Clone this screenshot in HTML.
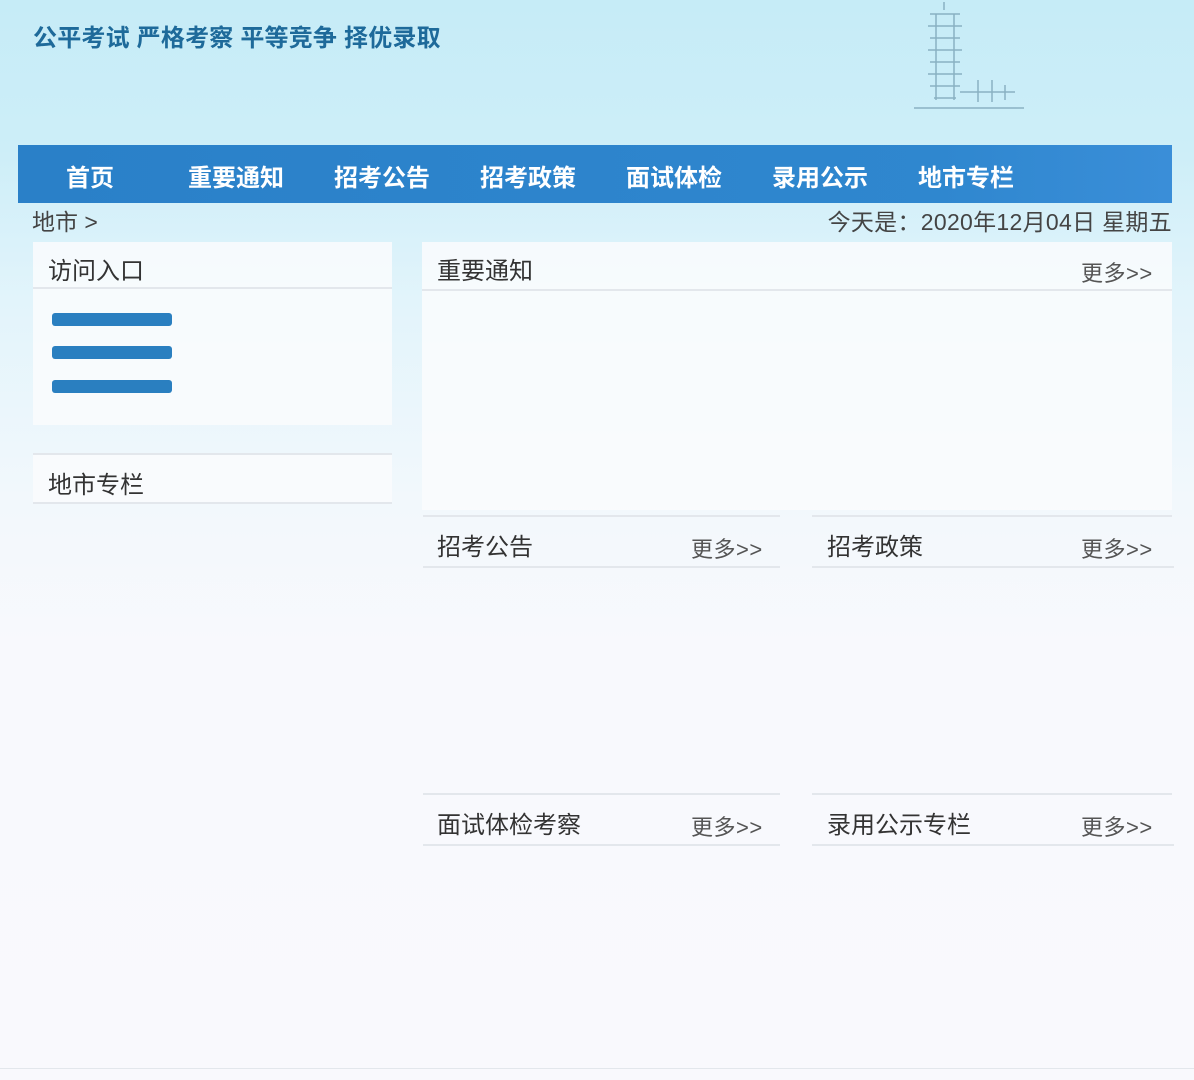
<!DOCTYPE html>
<html><head><meta charset="utf-8"><style>
*{margin:0;padding:0;box-sizing:border-box}
body{width:1194px;height:1080px;overflow:hidden;font-family:"Liberation Sans","Noto Sans CJK SC",sans-serif;background:linear-gradient(180deg,#c6ecf7 0px,#cdeef8 150px,#e2f4fb 300px,#f2f8fc 500px,#f8f9fd 650px,#f9f9fd 1080px);position:relative}
.a{position:absolute;white-space:nowrap}
.slogan{left:33px;top:18px;font-size:24px;font-weight:bold;color:#1e6a9a;letter-spacing:0.2px}
.nav{left:18px;top:145px;width:1154px;height:58px;background:linear-gradient(90deg,#2a80c8,#2f87cf 80%,#3a8ed8)}
.nav span{position:absolute;top:13px;font-size:24px;font-weight:bold;color:#fff}
.box{background:rgba(250,251,253,.85)}
.hd{font-size:24px;color:#333}
.more{font-size:22px;color:#555;letter-spacing:0.5px}
.line{height:2px;background:#e3e7ec}
.bar{left:52px;width:120px;height:13px;background:#2a7fc0;border-radius:3px}
</style></head><body>
<div class="a slogan">公平考试 严格考察 平等竞争 择优录取</div>
<svg class="a" style="left:900px;top:0" width="140" height="115" viewBox="0 0 140 115"><g stroke="#7aa3b5" fill="none" stroke-width="1.5" opacity=".8"><path d="M44 2v8M30 14h30M28 26h34M30 38h30M28 50h34M30 62h30M28 74h34M30 86h30M34 98h22M36 14v86M54 14v86"/><path d="M60 92h55M78 80v22M92 80v22M105 85v15M14 108h110"/></g></svg>
<div class="a nav">
<span style="left:48px">首页</span><span style="left:170px">重要通知</span><span style="left:316px">招考公告</span><span style="left:462px">招考政策</span><span style="left:608px">面试体检</span><span style="left:754px">录用公示</span><span style="left:900px">地市专栏</span>
</div>
<div class="a" style="left:32px;top:203px;font-size:23px;color:#444">地市 &gt;</div>
<div class="a" style="right:22px;top:203px;font-size:23px;color:#444;letter-spacing:0.3px">今天是：2020年12月04日 星期五</div>

<div class="a box" style="left:33px;top:242px;width:359px;height:183px"></div>
<div class="a hd" style="left:48px;top:251px">访问入口</div>
<div class="a line" style="left:33px;top:287px;width:359px"></div>
<div class="a bar" style="top:313px"></div>
<div class="a bar" style="top:346px"></div>
<div class="a bar" style="top:380px"></div>

<div class="a line" style="left:33px;top:453px;width:359px"></div>
<div class="a box" style="left:33px;top:455px;width:359px;height:47px"></div>
<div class="a hd" style="left:48px;top:465px">地市专栏</div>
<div class="a line" style="left:33px;top:502px;width:359px"></div>

<div class="a box" style="left:422px;top:242px;width:750px;height:268px"></div>
<div class="a hd" style="left:437px;top:251px">重要通知</div>
<div class="a more" style="left:1081px;top:256px">更多&gt;&gt;</div>
<div class="a line" style="left:422px;top:289px;width:750px"></div>

<div class="a line" style="left:423px;top:515px;width:357px"></div>
<div class="a hd" style="left:437px;top:527px">招考公告</div>
<div class="a more" style="left:691px;top:532px">更多&gt;&gt;</div>
<div class="a line" style="left:423px;top:566px;width:357px"></div>
<div class="a line" style="left:812px;top:515px;width:360px"></div>
<div class="a hd" style="left:827px;top:527px">招考政策</div>
<div class="a more" style="left:1081px;top:532px">更多&gt;&gt;</div>
<div class="a line" style="left:812px;top:566px;width:362px"></div>

<div class="a line" style="left:423px;top:793px;width:357px"></div>
<div class="a hd" style="left:437px;top:805px">面试体检考察</div>
<div class="a more" style="left:691px;top:810px">更多&gt;&gt;</div>
<div class="a line" style="left:423px;top:844px;width:357px"></div>
<div class="a line" style="left:812px;top:793px;width:360px"></div>
<div class="a hd" style="left:827px;top:805px">录用公示专栏</div>
<div class="a more" style="left:1081px;top:810px">更多&gt;&gt;</div>
<div class="a line" style="left:812px;top:844px;width:362px"></div>

<div class="a line" style="left:0;top:1068px;width:1194px;height:1px"></div>
</body></html>
